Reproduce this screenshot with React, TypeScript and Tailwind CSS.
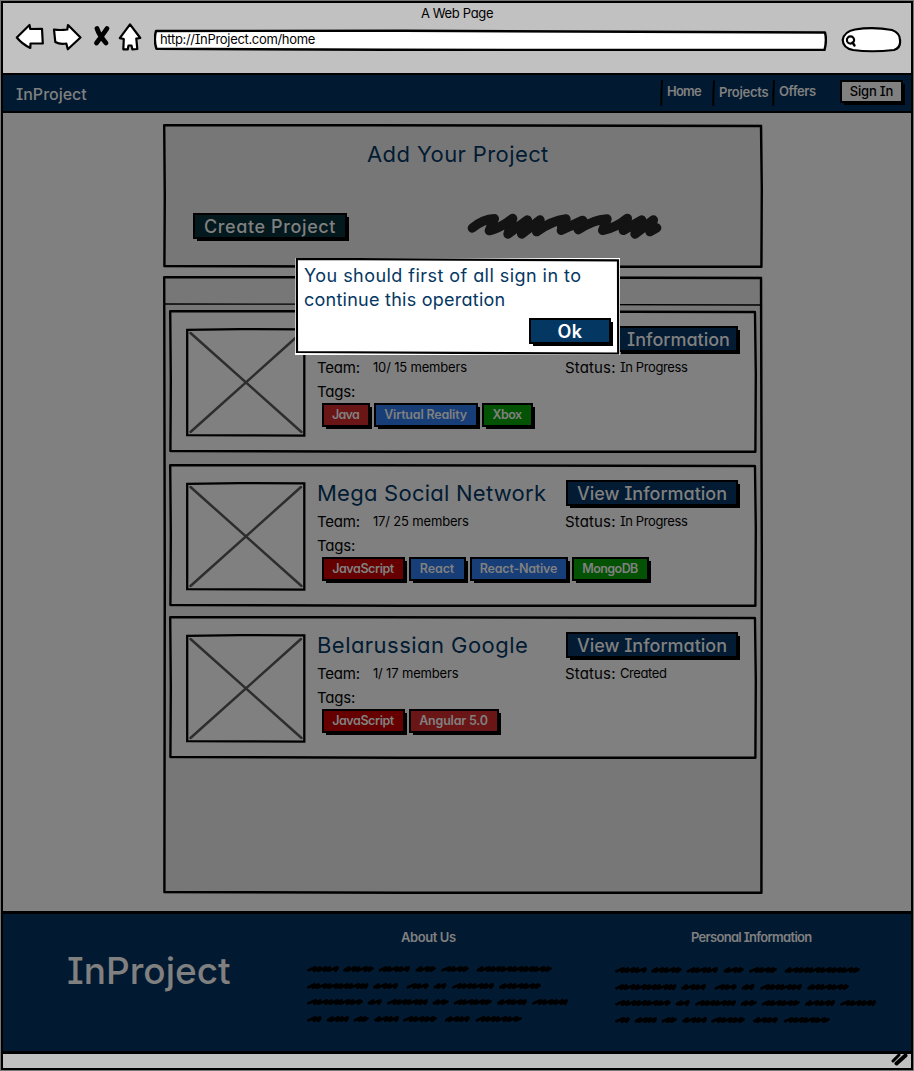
import type { ReactNode } from "react";

const GLYPHS = "[font-feature-settings:'cv08','cv11'] whitespace-nowrap";

/* Slightly uneven pen outline drawn over its parent */
function Frame({ w, h }: { w: number; h: number }) {
  return (
    <svg
      className="pointer-events-none absolute inset-0"
      width={w}
      height={h}
      viewBox={`0 0 ${w} ${h}`}
      fill="none"
      stroke="#000"
      strokeWidth="2.4"
      strokeLinejoin="round"
      aria-hidden="true"
    >
      <path
        d={`M1.2 1.3 L${w * 0.35} 1.2 L${w - 2} 2 L${w - 1.2} ${h * 0.45} L${w - 1.6} ${h - 1.3} L${w * 0.4} ${h - 1.3} L1.4 ${h - 2} L1.8 ${h * 0.5} Z`}
      />
    </svg>
  );
}

function Button({ className, children }: { className: string; children: ReactNode }) {
  return (
    <button
      className={`${GLYPHS} flex shrink-0 items-center justify-center border-2 border-black shadow-[3px_3px_0_-1px_#000] ${className}`}
    >
      {children}
    </button>
  );
}

type Tag = { label: string; style: string };
type Project = {
  title?: string;
  titleStyle?: string;
  action: string;
  actionStyle: string;
  members: string;
  status: string;
  tags: Tag[];
  gap: string;
};

const projects: Project[] = [
  {
    action: "Information",
    actionStyle: "ml-auto w-[121px] pl-[2px]",
    members: "10/ 15 members",
    status: "In Progress",
    gap: "mb-[11px]",
    tags: [
      { label: "Java", style: "w-[48px] bg-[#6b1616] tracking-[-0.75px]" },
      { label: "Virtual Reality", style: "w-[104px] bg-[#173e77] tracking-[-0.2px]" },
      { label: "Xbox", style: "w-[51px] bg-[#045304] tracking-[-0.6px]" },
    ],
  },
  {
    title: "Mega Social Network",
    titleStyle: "tracking-[0.25px]",
    action: "View Information",
    actionStyle: "w-[172px]",
    members: "17/ 25 members",
    status: "In Progress",
    gap: "mb-[9px]",
    tags: [
      { label: "JavaScript", style: "w-[83px] bg-[#660000] tracking-[-0.42px]" },
      { label: "React", style: "w-[57px] bg-[#173e77] tracking-[-0.1px]" },
      { label: "React-Native", style: "w-[98px] bg-[#173e77] tracking-[-0.22px]" },
      { label: "MongoDB", style: "w-[77px] bg-[#045304] tracking-[-0.55px]" },
    ],
  },
  {
    title: "Belarussian Google",
    titleStyle: "tracking-[0.46px]",
    action: "View Information",
    actionStyle: "w-[172px]",
    members: "1/ 17 members",
    status: "Created",
    gap: "",
    tags: [
      { label: "JavaScript", style: "w-[83px] bg-[#660000] tracking-[-0.42px]" },
      { label: "Angular 5.0", style: "w-[90px] bg-[#6b1616] tracking-[-0.2px]" },
    ],
  },
];

function Placeholder() {
  return (
    <svg className="mt-[18px] shrink-0" width="120" height="109" viewBox="0 0 120 109" fill="none" strokeLinecap="round">
      <path d="M4.5 5 L115.5 104 M115 5 L4.5 104" stroke="#2d2d2d" strokeWidth="2.5" />
      <path d="M1.2 1.8 L54 1.2 L118.3 1.3 L118.3 107.6 L60 107.4 L1.2 107.2 Z" stroke="#000" strokeWidth="2.3" />
    </svg>
  );
}

function Card({ project }: { project: Project }) {
  return (
    <article className={`relative flex h-[143px] w-[588px] gap-[11px] bg-[#808080] pl-[17px] ${project.gap}`}>
      <Frame w={588} h={143} />
      <Placeholder />
      <div className="w-[421px] pt-4">
        <div className="flex h-[26px] items-center justify-between">
          {project.title && (
            <h3 className={`${GLYPHS} text-[22px] leading-[26px] text-[#021b33] ${project.titleStyle}`}>{project.title}</h3>
          )}
          <Button className={`h-[26px] bg-[#031b33] text-[18px] font-medium text-[#808080] ${project.actionStyle}`}>
            {project.action}
          </Button>
        </div>
        <div className={`${GLYPHS} mt-1 grid h-6 grid-cols-[56px_192px_55px_1fr] items-center text-[13px] text-black`}>
          <span className="text-[15px] tracking-[-0.2px]">Team:</span>
          <span className="tracking-[-0.17px]">{project.members}</span>
          <span className="text-[15px] tracking-[0.15px]">Status:</span>
          <span className="tracking-[-0.4px]">{project.status}</span>
        </div>
        <div className={`${GLYPHS} h-[23px] text-[15px] leading-[23px] tracking-[-0.2px] text-black`}>Tags:</div>
        <div className="flex gap-1 pl-[5px]">
          {project.tags.map((t) => (
            <Button key={t.label} className={`h-6 pr-px text-[12.5px] font-semibold text-[#808080] ${t.style}`}>
              {t.label}
            </Button>
          ))}
        </div>
      </div>
    </article>
  );
}

/* Start and end of every scribbled word, line by line */
const scribbleLines = [
  [[0, 32], [36, 67], [71.5, 103], [108.5, 129], [134, 162], [169.5, 245]],
  [[0, 61.5], [66, 91], [99.5, 122], [126.5, 139.5], [145, 187], [192, 234]],
  [[0, 56], [60.5, 75], [80, 121], [125.5, 142], [146.5, 185], [190, 220], [225, 261]],
  [[0, 15], [19.5, 42], [46.5, 62], [67, 92], [96, 130], [138, 163], [168.5, 215]],
];
const lineCentres = [5, 22, 38, 55];

function wordPath(a: number, b: number, y: number, seed: number) {
  let x = a + 1.5;
  let d = `M${x} ${y + 1.2}`;
  let i = seed;
  while (x < b - 5) {
    const rise = [7, 4.4, 6, 4, 7.4, 4.2][i % 6];
    x = Math.min(x + rise, b - 1.5);
    d += ` L${x.toFixed(1)} ${(y - 1.6).toFixed(1)} L${(x - 1.6).toFixed(1)} ${(y + 1.7).toFixed(1)}`;
    i += 1;
  }
  return `${d} L${b - 1.5} ${y - 0.6}`;
}

function Scribble() {
  return (
    <svg width="264" height="62" viewBox="0 0 264 62" fill="none" stroke="#000" strokeWidth="2.8" strokeLinecap="round" strokeLinejoin="round">
      {scribbleLines.map((words, row) =>
        words.map(([a, b], i) => <path key={`${row}-${i}`} d={wordPath(a, b, lineCentres[row], row * 2 + i)} />),
      )}
    </svg>
  );
}

function Toolbar() {
  return (
    <div className="h-[70px] bg-[#c1c1c1]">
      <p className={`${GLYPHS} pt-px text-center text-[13px] leading-[18px] tracking-[-0.35px] text-black`}>A Web Page</p>
      <div className="flex pl-3 pt-px">
        <svg width="128" height="34" viewBox="15 20 128 34" className="-mt-[3px] shrink-0" fill="#fff" stroke="#000" strokeWidth="2.2" strokeLinejoin="round" strokeLinecap="round">
          <path d="M16.8 37.500 L29.5 25 L30.3 29 L42 28.800 L42.8 43.5 L30.500 43.5 L30.3 48 Q22 44 16.800 37.500Z" />
          <path d="M54 29.500 Q60 30.500 67.3 29.500 L68 25 L80.5 37.5 L67.8 49.3 L66.3 43.5 Q60 44.8 55.300 42 Z" />
          <path d="M97 28.500 Q99 35 106 43 M107 28.5 Q102 36 96.500 43" strokeWidth="4.800" fill="none" />
          <path d="M130 24.3 L140.3 38 L136.3 38.6 L137.3 49 L132.3 49.3 L131.5 45.5 L128.5 45.5 L127.8 49.3 L123.3 49.3 L123.8 39 L119.8 38.2 Z" />
        </svg>
        <div className={`${GLYPHS} relative ml-[11px] mt-[5px] h-[23px] w-[673px] text-[13px] text-black`}>
          <svg className="absolute inset-0" width="673" height="23" viewBox="0 0 673 23">
            <path d="M2 3 L250 2.8 L671 4.5 Q673 12 670.5 22 L230 21.8 L2.5 20.8 Q-0.5 12 2 3Z" fill="#fff" stroke="#000" strokeWidth="2.4" strokeLinejoin="round" />
          </svg>
          <span className="relative block pl-[6px] leading-[23px] tracking-[-0.320px]">http://InProject.com/home</span>
        </div>
        <svg className="ml-[14px] mt-[3px] shrink-0" width="62" height="28" viewBox="0 0 62 28" fill="none" stroke="#000" strokeLinecap="round">
          <path d="M14 3.5 Q32 0.5 51 4 Q59 7 59 14 Q60 22 53 24 Q30 26.5 12 24 Q2 22 1.7 14 Q3 5.5 14 3.5Z" fill="#fff" strokeWidth="2.2" />
          <circle cx="9.5" cy="14" r="3.6" strokeWidth="2.2" />
          <path d="M11.5 16.5 L13.5 19.5" strokeWidth="2.4" />
        </svg>
      </div>
    </div>
  );
}

function Divider() {
  return (
    <svg className="h-7 w-[3px] shrink-0" viewBox="0 0 3 28">
      <path d="M2 2 L1.4 14 L1.2 26" stroke="#000" strokeWidth="2" strokeLinecap="round" fill="none" />
    </svg>
  );
}

function Header() {
  return (
    <header className="flex h-[40px] items-start border-b-2 border-t-2 border-black bg-[#021a31] text-[13px] font-semibold text-[#808080]">
      <span className={`${GLYPHS} ml-[13px] mt-[7px] w-[644px] text-[16px] font-medium leading-6`}>InProject</span>
      <nav className={`${GLYPHS} mt-[4px] flex leading-[25px]`}>
        <span className="flex w-[52px] gap-1 tracking-[-0.8px]"><Divider />Home</span>
        <span className="flex w-[60px] gap-1 tracking-[-0.25px]"><Divider /><span className="pt-px">Projects</span></span>
        <span className="flex w-[68px] gap-1 tracking-[-0.4px]"><Divider />Offers</span>
      </nav>
      <Button className="mt-[5px] h-[23px] w-[63px] bg-[#808080] text-[13px] font-medium tracking-[-0.2px] text-black">Sign In</Button>
    </header>
  );
}

function Dialog() {
  return (
    <div role="dialog" className="absolute left-[292px] top-[145px] h-[97px] w-[325px] bg-white">
      <svg className="absolute inset-0" width="325" height="97" viewBox="0 0 325 97" fill="none">
        <path d="M1.8 1.2 L60 1.2 L323 2.4 L323.2 95.5 L160 94.8 L2 94 Z" stroke="#000" strokeWidth="2.2" />
      </svg>
      <p className={`${GLYPHS} relative pl-[9px] pt-[6px] text-[18px] leading-6 text-[#053763]`}>
        <span className="block tracking-[0.45px]">You should first of all sign in to</span>
        <span className="block tracking-[0.25px]">continue this operation</span>
      </p>
      <Button className="relative ml-[234px] mt-[6px] h-[26px] w-[82px] bg-[#053763] text-[18px] font-semibold tracking-[0.4px] text-white">Ok</Button>
    </div>
  );
}

function Footer() {
  return (
    <footer className={`${GLYPHS} flex h-[143px] border-b-[3px] border-t-[3px] border-black bg-[#021a31] text-[#808080]`}>
      <div className="w-[301px] pl-[64px] pt-[33px] text-[37px] font-medium leading-[48px]">InProject</div>
      <div className="w-[308px] pt-[13px]">
        <h4 className="pl-[97px] text-[13px] font-semibold leading-5 tracking-[-0.42px]">About Us</h4>
        <div className="pl-[3px] pt-[17px]"><Scribble /></div>
      </div>
      <div className="pt-[13px]">
        <h4 className="pl-[79px] text-[13px] font-semibold leading-5 tracking-[-0.7px]">Personal Information</h4>
        <div className="pl-[3px] pt-[18px]"><Scribble /></div>
      </div>
    </footer>
  );
}

export default function App() {
  return (
    <div className="h-[1071px] w-[914px] overflow-hidden bg-[#777] p-px font-['Inter',sans-serif]">
      <div className="h-[1069px] w-[912px] border-2 border-black">
        <Toolbar />
        <Header />
        <main className="relative h-[798px] bg-[#808080] pl-[160px] pt-[11px]">
          <section className="relative h-[144px] w-[600px] bg-[#777]">
            <Frame w={600} h={144} />
            <h2 className={`${GLYPHS} pl-[204px] pt-[17px] text-[22px] leading-[26px] tracking-[0.4px] text-[#021b33]`}>Add Your Project</h2>
            <div className="flex pt-[46px]">
              <Button className="ml-[30px] h-[26px] w-[154px] bg-[#04191d] text-[18px] font-medium tracking-[0.62px] text-[#808080]">Create Project</Button>
              <svg className="ml-[120px] shrink-0" width="196" height="28" viewBox="21 282 588 84" fill="none" stroke="#131313" strokeWidth="28" strokeLinecap="round" strokeLinejoin="round">
                <path d="M37 327 Q70 300 103 299 L88 335 Q125 325 158 298 L144 345 L202 303 L185 345 L240 303 L230 338 Q275 305 318 300 L304 334 L368 304 L355 332 Q400 302 441 300 L428 334 Q470 325 502 298 L490 334 L545 303 L525 345 L580 303 L570 338 L590 327" />
                <path d="M150 325 L240 322 M305 322 L360 318 M490 322 L585 325" />
              </svg>
            </div>
          </section>
          <section className="relative mt-[8px] h-[618px] w-[600px] bg-[#777]">
            <Frame w={600} h={618} />
            <svg className="absolute left-0 top-[27px]" width="600" height="3" viewBox="0 0 600 3">
              <path d="M1 1 L220 1.2 L599 2" stroke="#000" strokeWidth="1.3" fill="none" />
            </svg>
            <div className="pl-[6px] pt-[34px]">
              {projects.map((p, i) => <Card key={i} project={p} />)}
            </div>
          </section>
          <Dialog />
        </main>
        <Footer />
        <div className="flex h-[14px] justify-end bg-[#c1c1c1]">
          <svg width="20" height="14" viewBox="0 0 20 14" stroke="#000" strokeLinecap="round">
            <path d="M2 7 L8 1" strokeWidth="3" />
            <path d="M5.5 9.500 L14.500 1.500" strokeWidth="4" />
          </svg>
        </div>
      </div>
    </div>
  );
}
